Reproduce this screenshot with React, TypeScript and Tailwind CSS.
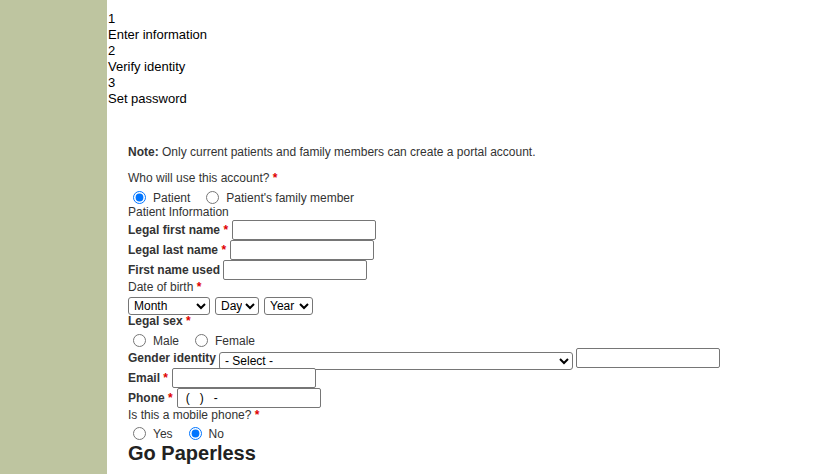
import React from 'react';

// 注册第一步：填写资料。
const STEPS = [
  { num: '1', label: 'Enter information' },
  { num: '2', label: 'Verify identity' },
  { num: '3', label: 'Set password' },
];

const MONTHS = ['Month', 'January', 'February', 'March', 'April', 'May', 'June', 'July', 'August', 'September', 'October', 'November', 'December'];

function Req() {
  return <span className="font-bold text-[#e00000]">*</span>;
}

function TextInput({ width = 'w-[144px]', value, className = '' }: { width?: string; value?: string; className?: string }) {
  return (
    <input
      type="text"
      defaultValue={value}
      className={`${width} h-[20px] border border-[#767676] rounded-[2px] bg-white px-[2px] text-[12px] text-black outline-none ${className}`}
    />
  );
}

function Radio({ name, checked, label }: { name: string; checked?: boolean; label: string }) {
  return (
    <label className="flex items-start mr-[11px]">
      <input type="radio" name={name} defaultChecked={checked} className="m-0 ml-[5px] mr-[7px] w-[13px] h-[13px]" />
      <span className="leading-[14px]">{label}</span>
    </label>
  );
}

function FieldRow({ label, required, children }: { label: string; required?: boolean; children: React.ReactNode }) {
  return (
    <div className="flex h-[20px] items-center">
      <span className="font-bold leading-[14px]">
        {label}
        {required && <> <Req /></>}
      </span>
      <div className={required ? 'ml-[4px] flex' : 'ml-[3px] flex'}>{children}</div>
    </div>
  );
}

const selectCls = 'mt-[3px] h-[18px] rounded-[3px] border border-[#767676] bg-white pl-px text-[12px] text-black';

export default function App() {
  return (
    <div className="flex min-h-[474px] bg-white font-['Liberation_Sans',Arial,sans-serif]">
      {/* 左侧色条 */}
      <div className="w-[107px] shrink-0 bg-[#bec5a0]" />

      <div className="flex-1">
        {/* 步骤 */}
        <div className="pl-px pt-[11px] text-[13px] leading-[16px] text-black">
          {STEPS.map((s) => (
            <div key={s.num}>
              <div>{s.num}</div>
              <div>{s.label}</div>
            </div>
          ))}
        </div>

        {/* 表单 */}
        <form className="mt-[37.5px] pl-[21px] text-[12px] leading-[14px] text-[#333]">
          <p className="m-0 mb-[12.5px]">
            <span className="font-bold">Note:</span> Only current patients and family members can create a portal account.
          </p>

          <div>
            Who will use this account? <Req />
          </div>
          <div className="flex h-[20px] items-start pt-[6px]">
            <Radio name="who" checked label="Patient" />
            <Radio name="who" label="Patient's family member" />
          </div>

          <div className="h-[15px]">Patient Information</div>

          <FieldRow label="Legal first name" required>
            <TextInput />
          </FieldRow>
          <FieldRow label="Legal last name" required>
            <TextInput />
          </FieldRow>
          <FieldRow label="First name used">
            <TextInput />
          </FieldRow>

          <div>
            Date of birth <Req />
          </div>
          <div className="flex h-[20px] items-start gap-[5px]">
            <select className={`${selectCls} w-[82px]`}>
              {MONTHS.map((m) => (
                <option key={m}>{m}</option>
              ))}
            </select>
            <select className={`${selectCls} w-[44px]`}>
              <option>Day</option>
            </select>
            <select className={`${selectCls} w-[49px]`}>
              <option>Year</option>
            </select>
          </div>

          <div className="font-bold">
            Legal sex <Req />
          </div>
          <div className="flex h-[20px] items-start pt-[6px]">
            <Radio name="sex" label="Male" />
            <Radio name="sex" label="Female" />
          </div>

          <div className="flex h-[20px] items-start">
            <span className="mt-[3px] font-bold">Gender identity</span>
            <select className="ml-[3px] mt-[3.5px] h-[18px] w-[354px] rounded-[3px] border border-[#767676] bg-white pl-px text-[12px] text-black">
              <option>- Select -</option>
            </select>
            <TextInput className="ml-[3px]" />
          </div>

          <FieldRow label="Email" required>
            <TextInput />
          </FieldRow>
          <FieldRow label="Phone" required>
            <TextInput value="(   )   -" className="pl-[8px] whitespace-pre" />
          </FieldRow>

          <div>
            Is this a mobile phone? <Req />
          </div>
          <div className="flex h-[20px] items-start pt-[5px]">
            <Radio name="mobile" label="Yes" />
            <Radio name="mobile" checked label="No" />
          </div>

          <h2 className="m-0 text-[20px] font-bold leading-[23px] text-[#222]">Go Paperless</h2>
        </form>
      </div>
    </div>
  );
}
